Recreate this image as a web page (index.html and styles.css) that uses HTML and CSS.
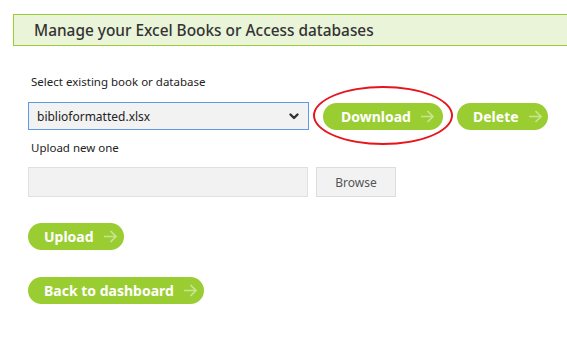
FILE: index.html
```html
<!DOCTYPE html>
<html>
<head>
<meta charset="utf-8">
<link rel="stylesheet" href="styles.css">
</head>
<body>
<div class="header"><h1 class="title">Manage your Excel Books or Access databases</h1></div>
<div class="content">
  <div class="label label-select">Select existing book or database</div>
  <div class="row select-row">
    <div class="select">
      <span class="select-text">biblioformatted.xlsx</span>
      <svg class="chevron" width="10" height="7" viewBox="0 0 10 7"><path d="M1.5 1.5 L5 5 L8.5 1.5" fill="none" stroke="#333" stroke-width="2.4" stroke-linecap="round" stroke-linejoin="round"/></svg>
    </div>
    <a class="btn btn-download">Download<svg class="arrow" width="15" height="15" viewBox="0 0 15 15"><path d="M1 7.5 H13 M7.5 2 L13 7.5 L7.5 13" fill="none" stroke="currentColor" stroke-width="1.7"/></svg></a>
    <a class="btn btn-delete">Delete<svg class="arrow" width="15" height="15" viewBox="0 0 15 15"><path d="M1 7.5 H13 M7.5 2 L13 7.5 L7.5 13" fill="none" stroke="currentColor" stroke-width="1.7"/></svg></a>
  </div>
  <div class="label label-upload">Upload new one</div>
  <div class="row file-row">
    <div class="file-box"></div>
    <div class="browse">Browse</div>
  </div>
  <a class="btn btn-upload">Upload<svg class="arrow" width="15" height="15" viewBox="0 0 15 15"><path d="M1 7.5 H13 M7.5 2 L13 7.5 L7.5 13" fill="none" stroke="currentColor" stroke-width="1.7"/></svg></a>
  <a class="btn btn-back">Back to dashboard<svg class="arrow" width="15" height="15" viewBox="0 0 15 15"><path d="M1 7.5 H13 M7.5 2 L13 7.5 L7.5 13" fill="none" stroke="currentColor" stroke-width="1.7"/></svg></a>
</div>
</body>
</html>
```
FILE: styles.css
```css
html, body { margin: 0; padding: 0; background: #fff; }
body { font-family: "Noto Sans", "DejaVu Sans", sans-serif; color: #333; width: 567px; overflow: hidden; }
.header {
  margin: 14px 0 0 13px;
  height: 30px;
  border: 1px solid #9acd32;
  border-right: none;
  background: #eaf4d9;
  display: flex;
  align-items: center;
  padding-left: 20px;
}
.title { margin: 0; font-size: 15.4px; font-weight: 500; color: #333; }
.content { padding-left: 28px; display: flex; flex-direction: column; align-items: flex-start; }
.label { font-size: 11.5px; color: #222; padding-left: 3px; height: 16px; line-height: 16px; }
.label-select { margin-top: 28px; }
.row { display: flex; align-items: center; }
.select-row { margin-top: 12px; }
.select {
  border: 1px solid #5b9bea;
  background: #f2f2f2;
  display: flex; align-items: center; justify-content: space-between;
  padding: 0 9px 0 8px; box-sizing: border-box; width: 281px; height: 28px;
}
.select-text { font-size: 12px; color: #222; }
.btn {
  display: inline-flex; align-items: center;
  background: #9acd32; color: #fff;
  font-weight: 700; font-size: 14px;
  height: 27px; border-radius: 14px;
  padding: 0 0 0 16px; box-sizing: border-box;
  text-decoration: none; white-space: nowrap;
}
.btn .arrow { color: #c8e58e; margin-left: 9px; }
.btn-download { width: 120px; margin-left: 14px; padding-left: 18px; position: relative; }
.btn-download::after {
  content: ""; position: absolute;
  left: -10px; right: -10px; top: -17px; bottom: -15px;
  border: 2px solid #e8141c; border-radius: 50%;
}
.btn-delete { width: 91px; margin-left: 14px; }
.label-upload { margin-top: 10px; }
.file-row { margin-top: 11px; }
.file-box { width: 280px; height: 30px; background: #f2f2f2; border: 1px solid #e0e0e0; box-sizing: border-box; }
.browse { width: 80px; height: 30px; margin-left: 8px; background: #f2f2f2; border: 1px solid #ddd; box-sizing: border-box; display: flex; align-items: center; justify-content: center; font-size: 12px; color: #555; }
.btn-upload { margin-top: 26px; width: 96px; }
.btn-back { margin-top: 27px; width: 176px; }
```
